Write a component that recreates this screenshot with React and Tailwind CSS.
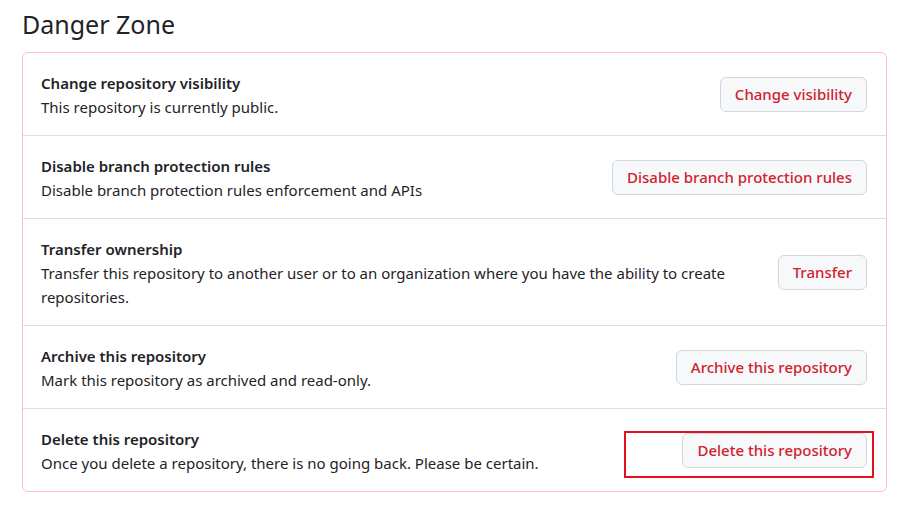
const rows = [
  {
    title: "Change repository visibility",
    desc: "This repository is currently public.",
    action: "Change visibility",
  },
  {
    title: "Disable branch protection rules",
    desc: "Disable branch protection rules enforcement and APIs",
    action: "Disable branch protection rules",
  },
  {
    title: "Transfer ownership",
    desc: "Transfer this repository to another user or to an organization where you have the ability to create repositories.",
    action: "Transfer",
  },
  {
    title: "Archive this repository",
    desc: "Mark this repository as archived and read-only.",
    action: "Archive this repository",
  },
  {
    title: "Delete this repository",
    desc: "Once you delete a repository, there is no going back. Please be certain.",
    action: "Delete this repository",
    highlight: true,
  },
];

function DangerButton({ label, className = "" }) {
  return (
    <button
      className={`h-[35px] px-[14px] rounded-md border border-[#d0d7de] bg-[#f6f8fa] text-[15px] font-medium text-[#cf222e] whitespace-nowrap ${className}`}
    >
      {label}
    </button>
  );
}

export default function App() {
  return (
    <div
      className="bg-white w-[898px] h-[511px] pl-[22px] pr-[11px] pt-[6px] text-[#1f2328]"
      style={{ fontFamily: '"Segoe UI", "Noto Sans", sans-serif' }}
    >
      <h2 className="text-[25px] leading-[36px] font-normal mb-[10px]">Danger Zone</h2>
      <div className="border border-[#ffc1c0] rounded-md">
        {rows.map((r, i) => (
          <div
            key={i}
            className={`flex items-center justify-between pl-[18px] pr-[19px] pt-[18px] pb-[16px] ${
              i > 0 ? "border-t border-[#d8dee4]" : ""
            }`}
          >
            <div className="text-[15px] leading-6 max-w-[690px]">
              <div className="font-semibold">{r.title}</div>
              <div>{r.desc}</div>
            </div>
            {r.highlight ? (
              <div className="border-2 border-[#e3101d] pl-[56px] pr-[5px] mr-[-7px] mt-[2px] mb-[-4px] h-[47px] flex items-start">
                <DangerButton label={r.action} />
              </div>
            ) : (
              <DangerButton label={r.action} className="-mt-[2px]" />
            )}
          </div>
        ))}
      </div>
    </div>
  );
}
